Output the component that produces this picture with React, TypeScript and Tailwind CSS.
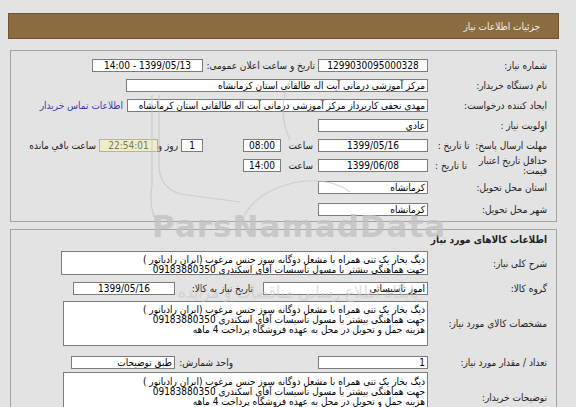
import React from "react";

const box = "h-[13px] shrink-0 bg-white border border-[#7c7c7c] leading-[11px] text-black overflow-hidden whitespace-nowrap px-[2px]";
const area = "shrink-0 bg-white border border-[#7c7c7c] text-black overflow-hidden whitespace-nowrap pr-[2px] pt-[3px] leading-[10px] text-right";

const L1 = "دیگ بخار یک تنی همراه با مشعل دوگانه سوز جنس مرغوب (ایران رادیاتور )";
const L2 = "جهت هماهنگی بیشتر با مسول تاسیسات آقای اسکندری 09183880350";
const L3 = "هزینه حمل و تحویل در محل به عهده فروشگاه پرداخت 4 ماهه";

function Label({ children }: { children: React.ReactNode }) {
  return <div className="w-[128px] shrink-0 pr-[9px] text-right whitespace-nowrap">{children}</div>;
}

export default function App() {
  return (
    <div
      dir="rtl"
      className="relative w-[576px] h-[407px] overflow-hidden bg-[#e3e3e3] text-[10px] text-[#222] font-['DejaVu_Sans_Condensed','DejaVu_Sans',sans-serif] pt-[13px]"
    >
      {/* header */}
      <div className="ml-[8px] mr-[17px] h-[26px] bg-[#8b6c41] border border-[#6e5530] flex items-center pr-[18px] text-[#f4efe6] text-[10px]">
        جزئیات اطلاعات نیاز
      </div>

      {/* panel 1 */}
      <div className="ml-[10px] mr-[19px] mt-[11px] h-[172px] border border-[#a3a3a3] pt-[8px]">
        <div className="flex items-center h-[13px]">
          <Label>شماره نیاز:</Label>
          <div className={`${box} w-[110px] text-center`}>1299030095000328</div>
          <div className="w-[112px] mr-[3px] shrink-0 text-right whitespace-nowrap">تاریخ و ساعت اعلان عمومی:</div>
          <div className={`${box} w-[111px] text-center`}>1399/05/13 - 14:00</div>
        </div>

        <div className="flex items-center h-[13px] mt-[7px]">
          <Label>نام دستگاه خریدار:</Label>
          <div className={`${box} w-[302px] text-right`}>مرکز آموزشی درمانی آیت اله طالقانی استان کرمانشاه</div>
        </div>

        <div className="flex items-center h-[13px] mt-[7px]">
          <Label>ایجاد کننده درخواست:</Label>
          <div className={`${box} w-[301px] text-right`}>مهدی نجفی کاربرداز مرکز آموزشی درمانی آیت اله طالقانی استان کرمانشاه</div>
          <div className="w-[80px] mr-[4px] shrink-0 text-right whitespace-nowrap text-[#3a3aa8]">اطلاعات تماس خریدار</div>
        </div>

        <div className="flex items-center h-[13px] mt-[7px]">
          <Label>اولویت نیاز :</Label>
          <div className={`${box} w-[110px] text-right`}>عادي</div>
        </div>

        <div className="flex items-center h-[13px] mt-[7px]">
          <Label>مهلت ارسال پاسخ:&nbsp; تا تاریخ :</Label>
          <div className={`${box} w-[110px] text-center`}>1399/05/16</div>
          <div className="w-[37px] shrink-0 pr-[5px] text-right whitespace-nowrap">ساعت</div>
          <div className={`${box} w-[38px] text-center`}>08:00</div>
          <div className={`${box} w-[22px] mr-[40px] text-center`}>1</div>
          <div className="w-[23px] shrink-0 pr-[3px] text-right whitespace-nowrap">روز و</div>
          <div className="h-[13px] w-[59px] shrink-0 bg-[#efedc9] border border-[#b9b58e] leading-[11px] text-center text-[#77775a]">22:54:01</div>
          <div className="mr-[3px] shrink-0 text-right whitespace-nowrap">ساعت باقي مانده</div>
        </div>

        <div className="flex items-center h-[13px] mt-[7px]">
          <div className="w-[128px] shrink-0 pr-[9px] flex items-center">
            <div className="w-[68px] shrink-0 text-right leading-[10px] whitespace-nowrap">
              حداقل تاریخ اعتبار
              <br />
              قیمت:
            </div>
            <div className="mr-[12px] whitespace-nowrap">تا تاریخ :</div>
          </div>
          <div className={`${box} w-[110px] text-center`}>1399/06/08</div>
          <div className="w-[37px] shrink-0 pr-[5px] text-right whitespace-nowrap">ساعت</div>
          <div className={`${box} w-[38px] text-center`}>14:00</div>
        </div>

        <div className="flex items-center h-[13px] mt-[9px]">
          <Label>استان محل تحویل:</Label>
          <div className={`${box} w-[110px] text-right`}>کرمانشاه</div>
        </div>

        <div className="flex items-center h-[13px] mt-[9px]">
          <Label>شهر محل تحویل:</Label>
          <div className={`${box} w-[110px] text-right`}>کرمانشاه</div>
        </div>
      </div>

      {/* panel 2 */}
      <div className="ml-[10px] mr-[19px] mt-[7px] h-[200px] border border-[#a3a3a3] pt-[4px]">
        <div className="pr-[9px] h-[12px] leading-[12px] font-bold text-right">اطلاعات کالاهای مورد نیاز</div>

        <div className="flex items-center mt-[5px]">
          <Label>شرح کلی نیاز:</Label>
          <div className={`${area} w-[367px] h-[24px]`}>
            <div>{L1}</div>
            <div>{L2}</div>
          </div>
        </div>

        <div className="flex items-center h-[13px] mt-[7px]">
          <Label>گروه کالا:</Label>
          <div className={`${box} w-[165px] text-right`}>امور تاسیساتی</div>
          <div className="w-[88px] shrink-0 pr-[10px] text-right whitespace-nowrap">تاریخ نیاز به کالا:</div>
          <div className={`${box} w-[102px] text-center`}>1399/05/16</div>
        </div>

        <div className="flex items-center mt-[6px]">
          <Label>مشخصات کالای مورد نیاز:</Label>
          <div className={`${area} w-[365px] h-[45px]`}>
            <div>{L1}</div>
            <div>{L2}</div>
            <div>{L3}</div>
          </div>
        </div>

        <div className="flex items-center h-[13px] mt-[10px]">
          <Label>تعداد / مقدار مورد نیاز:</Label>
          <div className={`${box} w-[110px] text-right`}>1</div>
          <div className="w-[143px] pr-[85px] shrink-0 text-right whitespace-nowrap">واحد شمارش:</div>
          <div className={`${box} w-[104px] text-right`}>طبق توضیحات</div>
        </div>

        <div className="flex items-center mt-[3px]">
          <Label>توضیحات خریدار:</Label>
          <div className={`${area} w-[365px] h-[50px] pt-[4px]`}>
            <div>{L1}</div>
            <div>{L2}</div>
            <div>{L3}</div>
          </div>
        </div>
      </div>

      {/* watermark logo */}
      <svg
        className="pointer-events-none absolute left-0 top-0 opacity-70"
        width="576"
        height="407"
        viewBox="0 0 576 407"
        fill="none"
        stroke="#c4c4c4"
        strokeWidth="1.2"
      >
        <path d="M152 95 V185 Q148 212 160 228" />
        <path d="M159 95 V168 Q161 188 180 194 L240 202" />
        <path d="M240 228 Q248 192 298 182 Q330 177 350 192" />
        <path d="M290 80 Q276 110 290 140" />
      </svg>
      <div
        dir="ltr"
        className="pointer-events-none absolute left-[152px] top-[203px] text-[31px] font-bold tracking-[1px] text-[#c2c2c2] opacity-80 font-['DejaVu_Sans',sans-serif]"
      >
        ParsNamadData
      </div>
      <div className="pointer-events-none absolute left-[178px] top-[280px] text-[17px] text-[#c8c8c8] opacity-60 whitespace-nowrap">
        پایگاه اطلاع رسانی مناقصات و مزایده
      </div>
    </div>
  );
}
